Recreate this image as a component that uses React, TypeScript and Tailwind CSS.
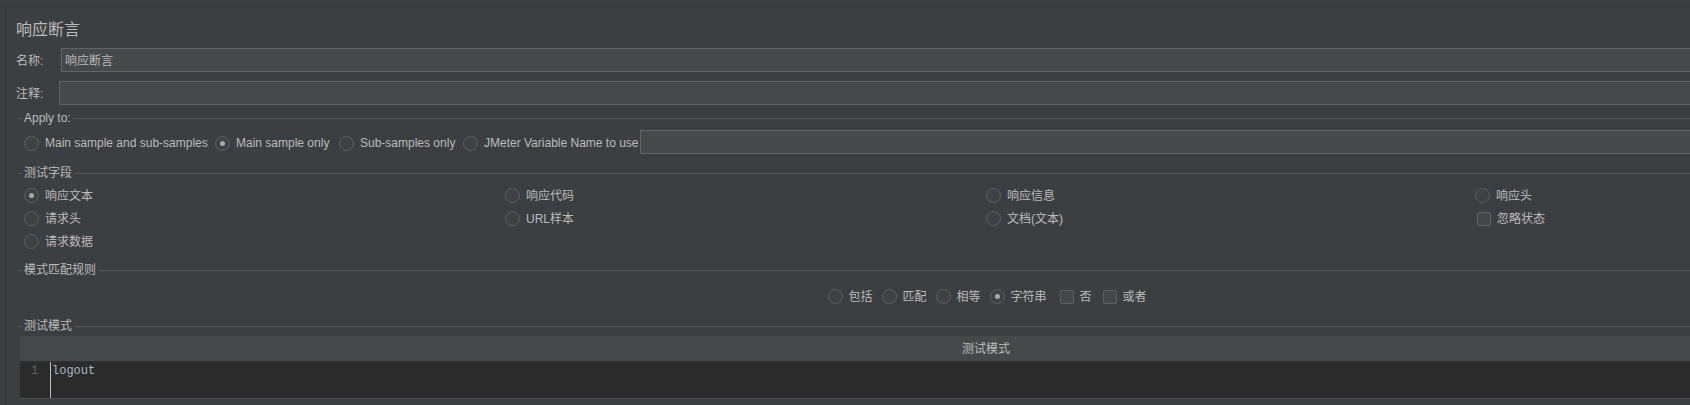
import React from "react";

const Radio = ({ checked }: { checked?: boolean }) => (
  <span className="flex h-[15px] w-[15px] shrink-0 items-center justify-center rounded-full border border-[#5f6264] bg-[#3f4244]">
    {checked && <span className="h-[5px] w-[5px] rounded-full bg-[#a8a8a8]" />}
  </span>
);

const Check = () => (
  <span className="ml-[2px] h-[14px] w-[14px] shrink-0 rounded-[2px] border border-[#5f6264] bg-[#43474a]" />
);

const Option = ({
  label,
  checked,
  box,
  className = "",
}: {
  label: string;
  checked?: boolean;
  box?: boolean;
  className?: string;
}) => (
  <div className={`flex shrink-0 items-center gap-[6px] whitespace-nowrap ${className}`}>
    {box ? <Check /> : <Radio checked={checked} />}
    <span>{label}</span>
  </div>
);

const Legend = ({ title, className = "" }: { title: string; className?: string }) => (
  <div className={`ml-[12px] flex h-[15px] items-center ${className}`}>
    <span className="h-px w-[4px] bg-[#56595b]" />
    <span className="px-[2px] leading-[15px]">{title}</span>
    <span className="h-px flex-1 bg-[#56595b]" />
  </div>
);

export default function App() {
  return (
    <div className="h-[405px] w-[1690px] overflow-hidden bg-[#3c3f41] font-['Liberation_Sans','Noto_Sans_CJK_SC',sans-serif] text-[12px] text-[#bbbbbb]">
      <div className="h-[6px]" />
      <div className="h-px w-[1960px] bg-[#333537]" />
      <div className="flex h-[398px] w-[1960px]">
        <div className="w-[5px] shrink-0" />
        <div className="w-px shrink-0 bg-[#333537]" />
        <div className="flex w-[1954px] shrink-0 flex-col">
          {/* title */}
          <div className="mt-[12px] h-[22px] pl-[10px] text-[16px] leading-[22px]">响应断言</div>

          {/* name */}
          <div className="mt-[7px] flex h-[24px] items-center pl-[10px]">
            <span className="w-[45px] shrink-0 pt-px">名称:</span>
            <div className="flex h-full flex-1 items-center border border-[#646464] bg-[#45494a] pl-[3px] pt-px">
              响应断言
            </div>
          </div>

          {/* comment */}
          <div className="mt-[9px] flex h-[24px] items-center pl-[10px]">
            <span className="w-[43px] shrink-0 pt-px">注释:</span>
            <div className="h-full flex-1 border border-[#646464] bg-[#45494a]" />
          </div>

          {/* apply to */}
          <Legend title="Apply to:" className="mt-[6px]" />
          <div className="mt-[4px] ml-[18px] flex h-[24px] items-center">
            <Option label="Main sample and sub-samples" className="w-[191px] pt-[2px]" />
            <Option label="Main sample only" checked className="w-[124px] pt-[2px]" />
            <Option label="Sub-samples only" className="w-[124px] pt-[2px]" />
            <Option label="JMeter Variable Name to use" className="w-[177px] pt-[2px]" />
            <div className="h-full flex-1 border border-[#646464] bg-[#45494a]" />
          </div>

          {/* fields to test */}
          <Legend title="测试字段" className="mt-[12px]" />
          <div className="mt-[3px] ml-[18px] grid grid-cols-[481px_481px_489px_1fr] auto-rows-[23px] items-center">
            <Option label="响应文本" checked />
            <Option label="响应代码" />
            <Option label="响应信息" />
            <Option label="响应头" />
            <Option label="请求头" />
            <Option label="URL样本" />
            <Option label="文档(文本)" />
            <Option label="忽略状态" box />
            <Option label="请求数据" />
          </div>

          {/* pattern matching rules */}
          <Legend title="模式匹配规则" className="mt-[10px]" />
          <div className="mt-[7px] ml-[14px] flex h-[23px] w-[1932px] items-center justify-center">
            <Option label="包括" className="w-[54px]" />
            <Option label="匹配" className="w-[54px]" />
            <Option label="相等" className="w-[54px]" />
            <Option label="字符串" checked className="w-[68px]" />
            <Option label="否" box className="w-[43px] gap-[4px]" />
            <Option label="或者" box className="w-[44px] gap-[4px]" />
          </div>

          {/* patterns to test */}
          <Legend title="测试模式" className="mt-[11px]" />
          <div className="mt-[2px] ml-[14px] w-[1932px]">
            <div className="h-[26px] border-b border-[#2f3133] bg-[#45494a] pt-px text-center leading-[25px]">
              测试模式
            </div>
            <div className="flex h-[37px] border-b border-[#4b4e50] bg-[#2b2b2b]">
              <div className="w-[30px] shrink-0 pl-[11px] pt-[1px] font-['Liberation_Mono',monospace] leading-[16px] text-[#606366]">
                1
              </div>
              <div className="border-l border-[#bbbbbb] pl-px pt-[1px] font-['Liberation_Mono',monospace] text-[12px] leading-[16px] text-[#a9b7c6]">
                logout
              </div>
            </div>
          </div>
        </div>
      </div>
    </div>
  );
}
